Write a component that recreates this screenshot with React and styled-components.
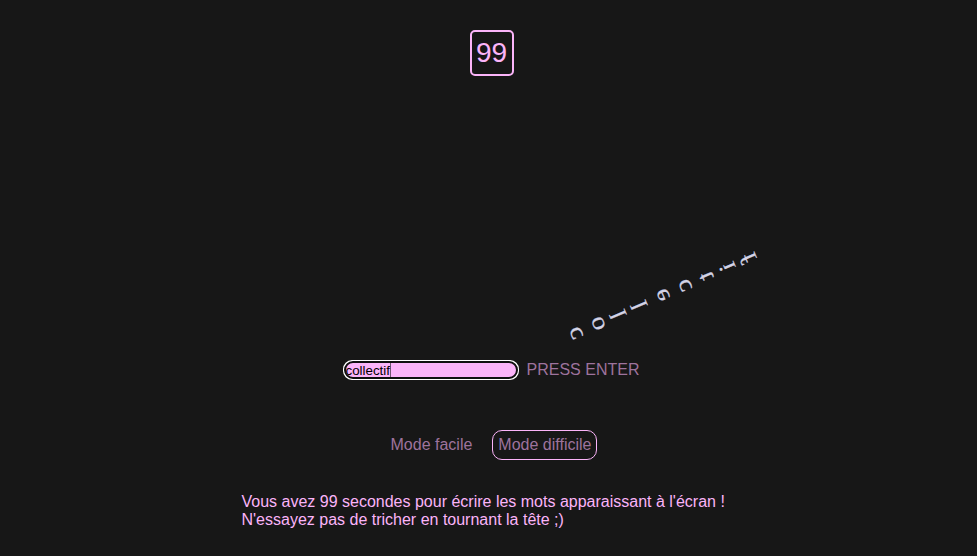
import React from "react";
import styled, { createGlobalStyle } from "styled-components";

const GlobalStyle = createGlobalStyle`
  * { box-sizing: border-box; }
  body {
    margin: 0;
    background: #171717;
    color: #fbb4f9;
    font: 16px/18px "Liberation Sans", Arial, sans-serif;
    overflow: hidden;
  }
`;

const Page = styled.main`
  position: relative;
  display: flex;
  flex-direction: column;
  align-items: center;
  height: 556px;
  padding: 30px 0 0 7px;
`;

const Timer = styled.div`
  width: 44px;
  height: 46px;
  border: 2px solid #fbb4f9;
  border-radius: 5px;
  font-size: 28px;
  line-height: 41px;
  text-align: center;
  text-indent: -1px;
`;

const WordStage = styled.section`
  height: 286px;
`;

const Word = styled.div`
  position: absolute;
  left: 651px;
  top: 187px;
  width: 24px;
  height: 216px;
  display: flex;
  flex-direction: column;
  align-items: center;
  color: #d3d3e6;
  font: 24px/23.8px "Liberation Serif", "Times New Roman", serif;
  -webkit-text-stroke: 0.25px #d3d3e6;
  transform: matrix(0.45, 1.03, 0.916, -0.401, 0, 0);
`;

const Answer = styled.form`
  display: flex;
  align-items: center;
  height: 16px;
  gap: 10px;
`;

const Field = styled.div`
  position: relative;
  width: 172px;
  height: 16px;
  padding-left: 1px;
  border-radius: 10px;
  background: #fbb4f9;
  color: #000;
  outline: -webkit-focus-ring-color auto 1px;
  font-size: 13.333px;
  line-height: 17px;
`;

const Caret = styled.span`
  display: inline-block;
  width: 1px;
  height: 16px;
  background: #17171799;
  vertical-align: top;
`;

const Hint = styled.span`
  color: #9e739d;
`;

const Modes = styled.nav`
  display: flex;
  gap: 14px;
  margin: 52px 2px 0 0;
`;

const Mode = styled.button`
  height: 30px;
  padding: 0 5px;
  border: 1px solid ${(p) => (p.$active ? "#fbb4f9" : "transparent")};
  border-radius: 10px;
  background: none;
  color: #9e739d;
  font: inherit;
`;

const Rules = styled.p`
  width: 501px;
  margin: 33px 0 0;
`;

export default function App() {
  return (
    <>
      <GlobalStyle />
      <Page>
        <Timer>99</Timer>
        <WordStage>
          <Word>
            {[..."collectif"].map((letter, i) => (
              <span key={i}>{letter}</span>
            ))}
          </Word>
        </WordStage>
        <Answer>
          <Field role="textbox">
            collectif<Caret />
          </Field>
          <Hint>PRESS ENTER</Hint>
        </Answer>
        <Modes>
          <Mode>Mode facile</Mode>
          <Mode $active>Mode difficile</Mode>
        </Modes>
        <Rules>
          Vous avez 99 secondes pour écrire les mots apparaissant à l'écran !
          <br />
          N'essayez pas de tricher en tournant la tête ;)
        </Rules>
      </Page>
    </>
  );
}
